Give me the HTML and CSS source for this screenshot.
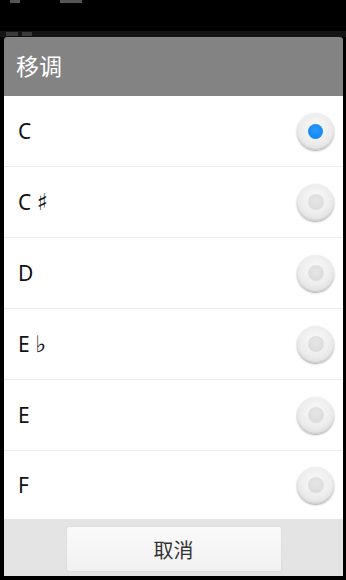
FILE: index.html
```html
<!DOCTYPE html>
<html lang="zh">
<head>
<meta charset="utf-8">
<link rel="stylesheet" href="styles.css">
</head>
<body>
<div class="screen">
  <div class="topbar"><span class="mark m1"></span><span class="mark m2"></span></div>
  <div class="strip"><span class="tiny t1"></span><span class="tiny t2"></span></div>
  <div class="dialog">
    <div class="title">移调</div>
    <ul class="list">
      <li class="row"><span class="label">C</span><span class="radio checked"><span class="dot"></span></span></li>
      <li class="row"><span class="label">C <span class="acc">♯&#xFE0E;</span></span><span class="radio"><span class="dot"></span></span></li>
      <li class="row"><span class="label">D</span><span class="radio"><span class="dot"></span></span></li>
      <li class="row"><span class="label">E <span class="acc">♭&#xFE0E;</span></span><span class="radio"><span class="dot"></span></span></li>
      <li class="row"><span class="label">E</span><span class="radio"><span class="dot"></span></span></li>
      <li class="row last"><span class="label">F</span><span class="radio"><span class="dot"></span></span></li>
    </ul>
    <div class="footer"><button class="btn">取消</button></div>
  </div>
</div>
</body>
</html>
```
FILE: styles.css
```css
html, body {
  margin: 0;
  padding: 0;
  background: #000;
}
.screen {
  width: 346px;
  height: 580px;
  background: #000;
  font-family: "Noto Sans", "Noto Sans CJK SC", sans-serif;
  display: flex;
  flex-direction: column;
}
.topbar {
  height: 31px;
  display: flex;
  gap: 40px;
  padding-left: 10px;
  box-sizing: border-box;
}
.mark {
  height: 3px;
  background: #555;
}
.m1 { width: 10px; }
.m2 { width: 22px; }
.strip {
  height: 6px;
  background: #141414;
  display: flex;
  gap: 4px;
  padding: 1px 0 0 6px;
  box-sizing: border-box;
}
.tiny {
  height: 4px;
  background: #3a3a3a;
}
.t1 { width: 12px; }
.t2 { width: 10px; }
.dialog {
  margin: 0 3px 0 4px;
  width: 339px;
  display: flex;
  flex-direction: column;
  border-radius: 3px 3px 0 0;
  overflow: hidden;
}
.title {
  height: 59px;
  background: #838383;
  color: #fff;
  font-size: 23px;
  line-height: 59px;
  padding-left: 12px;
  box-sizing: border-box;
}
.list {
  list-style: none;
  margin: 0;
  padding: 0;
  background: #fff;
}
.row {
  height: 71px;
  display: flex;
  align-items: center;
  justify-content: space-between;
  padding: 0 9px 0 14px;
  border-bottom: 1px solid #ececec;
  box-sizing: border-box;
}
.row.last {
  border-bottom: none;
  height: 68px;
}
.label {
  font-size: 21px;
  color: #111;
}
.acc {
  font-family: "DejaVu Sans", sans-serif;
  font-variant-emoji: text;
  font-size: 23px;
  color: #111;
}
.radio {
  width: 37px;
  height: 37px;
  border-radius: 50%;
  background: radial-gradient(circle at 50% 40%, #fbfbfb 0%, #ececec 55%, #d2d2d2 100%);
  box-shadow: 0 1px 2px rgba(0,0,0,0.35), inset 0 -1px 1px rgba(0,0,0,0.1);
  display: flex;
  align-items: center;
  justify-content: center;
}
.dot {
  width: 16px;
  height: 16px;
  border-radius: 50%;
  background: radial-gradient(circle at 50% 40%, #e6e6e6, #d8d8d8);
}
.radio.checked .dot {
  width: 15px;
  height: 15px;
  background: radial-gradient(circle at 50% 40%, #2a9cff, #0a7ff0);
}
.footer {
  height: 57px;
  background: #e4e4e4;
  display: flex;
  justify-content: center;
  padding-top: 7px;
  box-sizing: border-box;
}
.btn {
  width: 216px;
  height: 46px;
  background: linear-gradient(#fafafa, #f1f1f1);
  border: 1px solid #dedede;
  border-radius: 3px;
  font-family: "Noto Sans CJK SC", sans-serif;
  font-size: 20px;
  color: #333;
  padding: 0;
}
```
